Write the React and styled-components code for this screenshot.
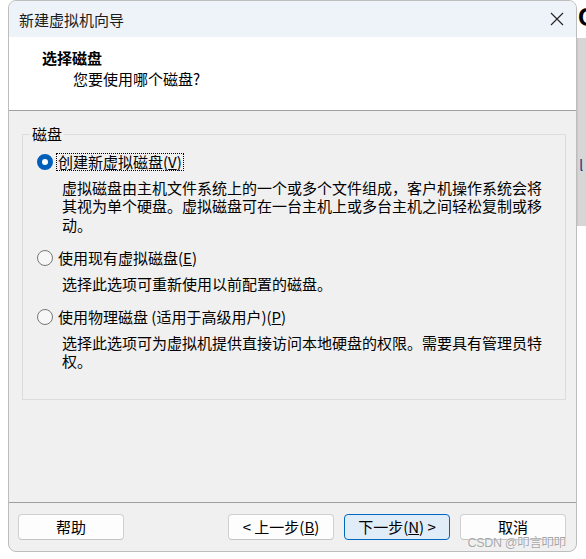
import React from "react";
import styled, { createGlobalStyle } from "styled-components";

const GlobalStyle = createGlobalStyle`
  html, body { margin: 0; padding: 0; background: #ffffff; }
  body { font-family: "Noto Sans CJK SC", "Noto Sans", sans-serif; color: #000; }
  * { box-sizing: border-box; }
`;

const Page = styled.div`
  display: flex;
  align-items: flex-start;
  padding-left: 8px;
  width: 586px;
  height: 559px;
  overflow: hidden;
`;

const Dialog = styled.div`
  position: relative;
  flex-shrink: 0;
  width: 569px;
  height: 552px;
  border: 1px solid #bdbdbd;
  border-radius: 8px;
  overflow: hidden;
  background: #f0f0f0;
  display: flex;
  flex-direction: column;
`;

const TitleBar = styled.div`
  height: 36px;
  flex-shrink: 0;
  background: #eef3f9;
  display: flex;
  align-items: center;
  justify-content: space-between;
  padding: 0 12px 0 10px;
  font-size: 15px;
  color: #1b1b1b;
`;

const CloseIcon = styled.svg`
  width: 14px;
  height: 14px;
  display: block;
`;

const Header = styled.div`
  height: 74px;
  flex-shrink: 0;
  background: #ffffff;
  border-bottom: 1px solid #a0a0a0;
  padding: 10px 0 0 33px;
  font-size: 15px;
  line-height: 21px;
`;

const HeaderTitle = styled.div`
  font-weight: 700;
`;

const HeaderSub = styled.div`
  padding-left: 31px;
`;

const Body = styled.div`
  height: 391px;
  flex-shrink: 0;
  padding: 14px 10px 0 13px;
`;

const Group = styled.fieldset`
  margin: 0;
  height: 275px;
  padding: 0 7px;
  border: 1px solid #dcdcdc;
  min-width: 0;
`;

const GroupLegend = styled.legend`
  padding: 0 2px;
  font-size: 15px;
  line-height: 18px;
`;

const Options = styled.div`
  margin-top: 9px;
  padding-left: 7px;
  display: flex;
  flex-direction: column;
  gap: 14px;
`;

const Option = styled.div`
  display: flex;
  flex-direction: column;
`;

const RadioRow = styled.div`
  display: flex;
  align-items: center;
  height: 20px;
  gap: 3px;
  font-size: 15px;
`;

const RadioCircle = styled.span`
  width: 16px;
  height: 16px;
  border-radius: 50%;
  flex-shrink: 0;
  background: ${(p) => (p.$checked ? "#ffffff" : "#f7f7f7")};
  border: ${(p) => (p.$checked ? "5px solid #005fb8" : "1px solid #777777")};
`;

const RadioLabel = styled.span`
  padding: 0 1px;
  line-height: 16px;
  border: 1px dotted ${(p) => (p.$focused ? "#000" : "transparent")};
  white-space: nowrap;
`;

const Desc = styled.div`
  margin-top: 6.5px;
  margin-left: 25px;
  margin-right: 14px;
  font-size: 15px;
  line-height: 18.5px;
`;

const Footer = styled.div`
  flex: 1;
  border-top: 1px solid #a0a0a0;
  padding: 11px 10px 11px 9px;
  display: flex;
  align-items: flex-start;
`;

const Spacer = styled.div`
  flex: 1;
`;

const Button = styled.button`
  width: 106px;
  height: 26px;
  padding: 0;
  margin-left: ${(p) => (p.$gap ? "10px" : "0")};
  border-radius: 4px;
  border: 1px solid ${(p) => (p.$primary ? "#0067c0" : "#d0d0d0")};
  border-bottom-color: ${(p) => (p.$primary ? "#0067c0" : "#c4c4c4")};
  background: ${(p) => (p.$primary ? "#e0ecf8" : "#fdfdfd")};
  font-family: "Noto Sans CJK SC", "Noto Sans", sans-serif;
  font-size: 15px;
  line-height: 24px;
  color: #000;
`;

const Watermark = styled.div`
  position: absolute;
  right: 10px;
  bottom: 1px;
  font-family: "Liberation Sans", "Noto Sans CJK SC", sans-serif;
  font-size: 12.5px;
  line-height: 14px;
  letter-spacing: -0.3px;
  color: rgba(150, 150, 150, 0.85);
  text-shadow: 0 0 1px #ffffff;
  pointer-events: none;
`;

const SideStrip = styled.div`
  width: 9px;
  flex-shrink: 0;
  overflow: hidden;
  display: flex;
  flex-direction: column;
`;

const SideLetter = styled.div`
  height: 38px;
  padding-left: 1px;
  font-family: "Liberation Sans", sans-serif;
  font-weight: 700;
  font-size: 26px;
  line-height: 34px;
  color: #000;
`;

const SidePanel = styled.div`
  height: 188px;
  background: #d6d6d6;
  border-left: 1px solid #c8c8c8;
  padding-top: 118px;
  padding-left: 1px;
  font-size: 15px;
  line-height: 18px;
  color: #1a3c8a;
  white-space: nowrap;
`;

const options = [
  {
    label: "创建新虚拟磁盘",
    key: "V",
    checked: true,
    desc: "虚拟磁盘由主机文件系统上的一个或多个文件组成，客户机操作系统会将其视为单个硬盘。虚拟磁盘可在一台主机上或多台主机之间轻松复制或移动。",
  },
  {
    label: "使用现有虚拟磁盘",
    key: "E",
    checked: false,
    desc: "选择此选项可重新使用以前配置的磁盘。",
  },
  {
    label: "使用物理磁盘 (适用于高级用户)",
    key: "P",
    checked: false,
    desc: "选择此选项可为虚拟机提供直接访问本地硬盘的权限。需要具有管理员特权。",
  },
];

export default function App() {
  return (
    <>
      <GlobalStyle />
      <Page>
        <Dialog>
          <TitleBar>
            <span>新建虚拟机向导</span>
            <CloseIcon viewBox="0 0 14 14">
              <path d="M1 1 L13 13 M13 1 L1 13" stroke="#222" strokeWidth="1.1" fill="none" />
            </CloseIcon>
          </TitleBar>
          <Header>
            <HeaderTitle>选择磁盘</HeaderTitle>
            <HeaderSub>您要使用哪个磁盘?</HeaderSub>
          </Header>
          <Body>
            <Group>
              <GroupLegend>磁盘</GroupLegend>
              <Options>
                {options.map((o) => (
                  <Option key={o.key}>
                    <RadioRow>
                      <RadioCircle $checked={o.checked} />
                      <RadioLabel $focused={o.checked}>
                        {o.label}(<u>{o.key}</u>)
                      </RadioLabel>
                    </RadioRow>
                    <Desc>{o.desc}</Desc>
                  </Option>
                ))}
              </Options>
            </Group>
          </Body>
          <Footer>
            <Button>帮助</Button>
            <Spacer />
            <Button>&lt; 上一步(<u>B</u>)</Button>
            <Button $gap $primary>下一步(<u>N</u>) &gt;</Button>
            <Button $gap>取消</Button>
          </Footer>
          <Watermark>CSDN @叩言叩叩</Watermark>
        </Dialog>
        <SideStrip>
          <SideLetter>C</SideLetter>
          <SidePanel>l</SidePanel>
        </SideStrip>
      </Page>
    </>
  );
}
